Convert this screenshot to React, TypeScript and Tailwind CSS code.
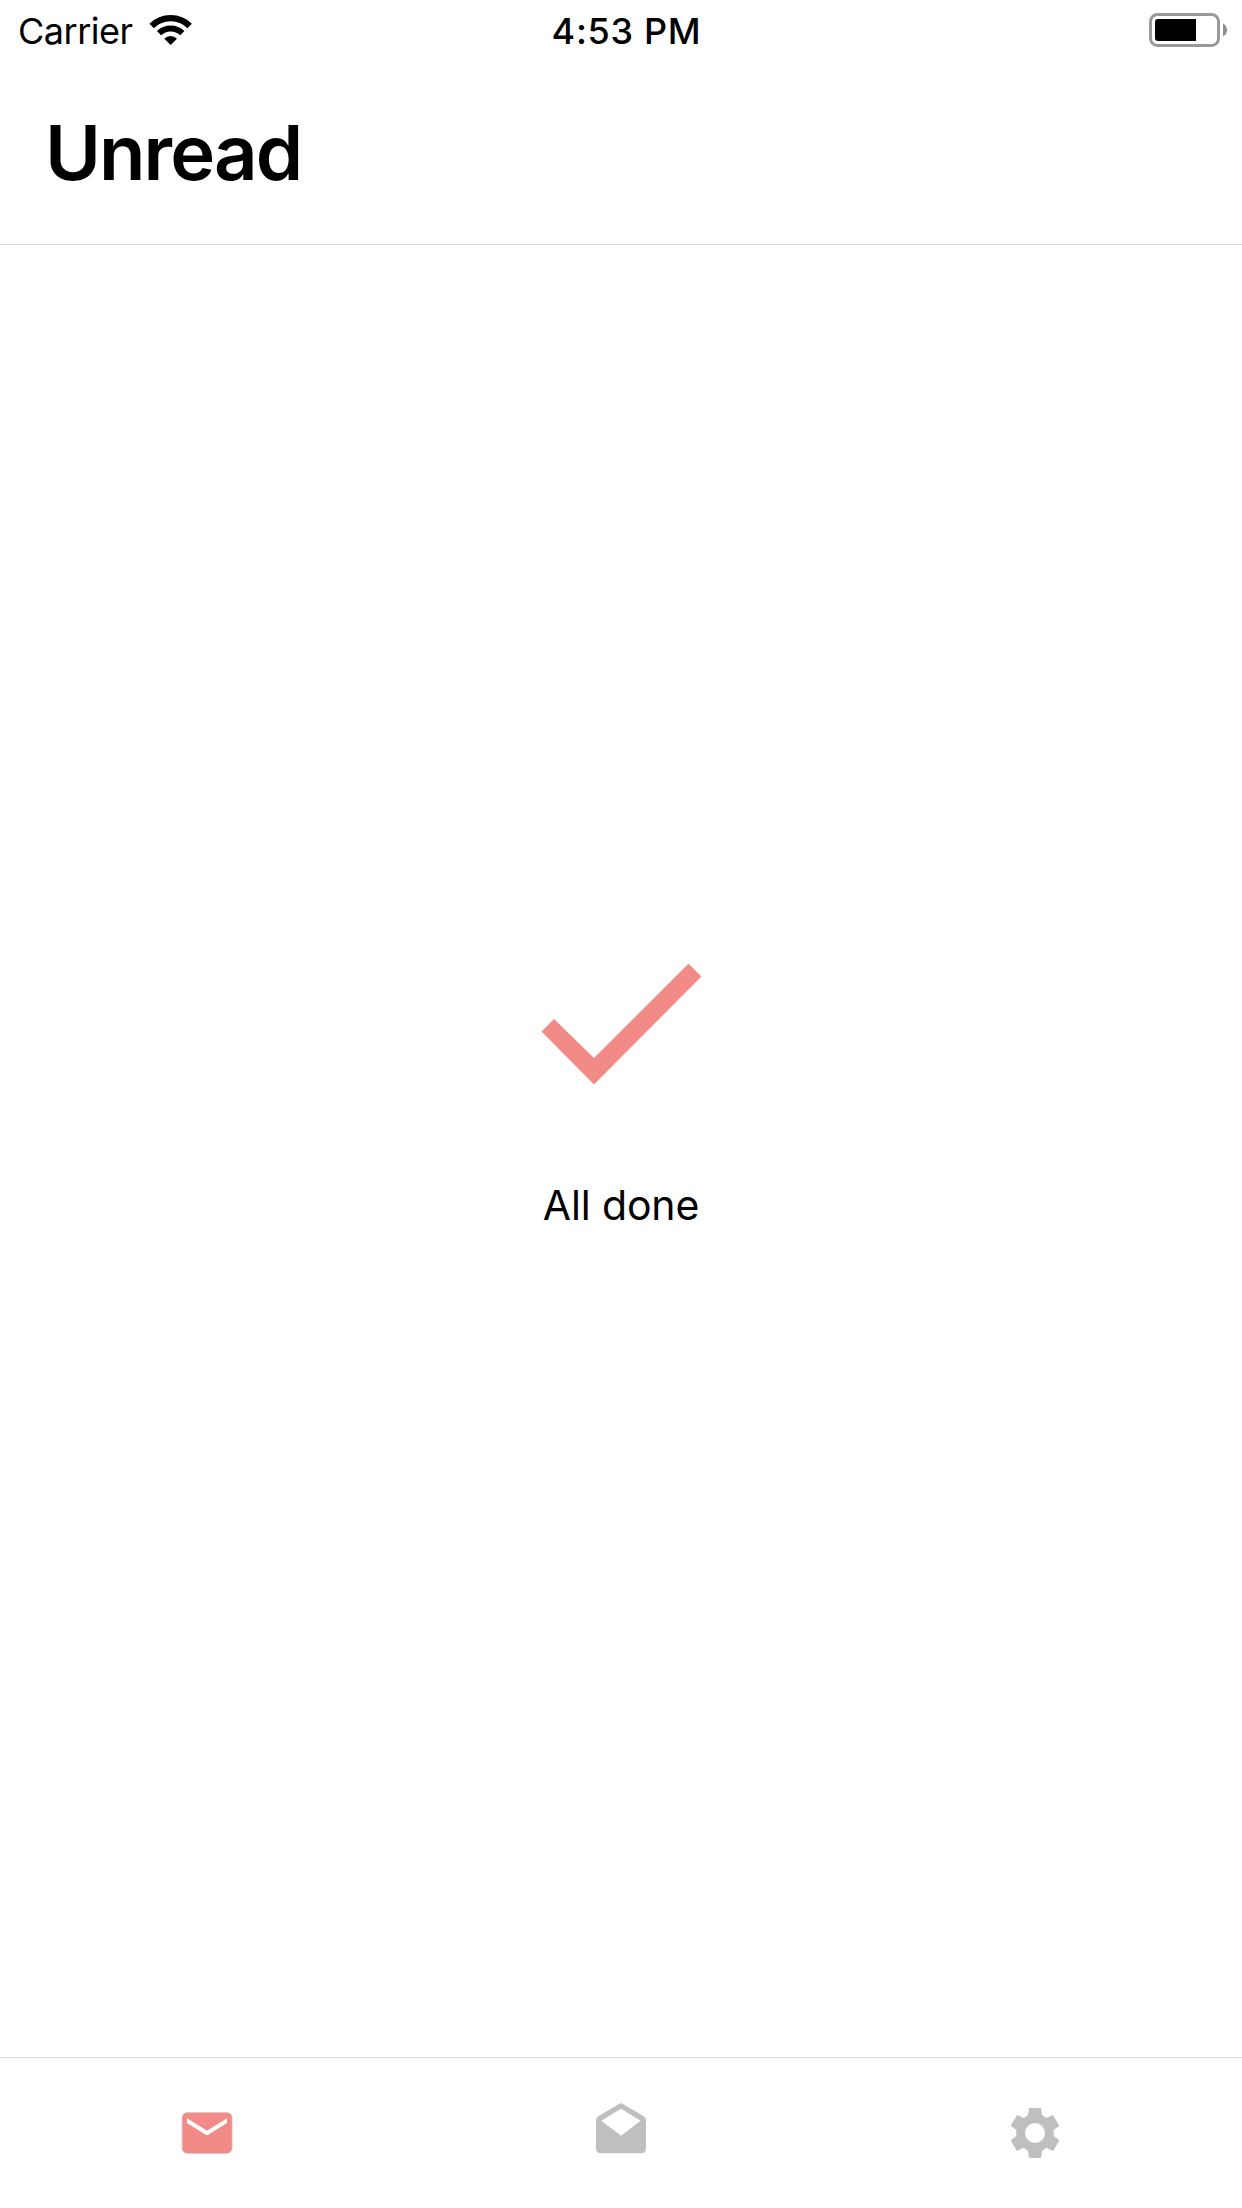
import React from "react";

function WifiIcon() {
  return (
    <svg className="relative -top-px h-[32px] w-[44px]" viewBox="448 42 132 96" fill="none" stroke="#000">
      <path d="M456 78A81 81 0 0 1 570 78" strokeWidth="19" />
      <path d="M478 99.500A50.500 50.500 0 0 1 548 99.500" strokeWidth="18" />
      <path d="M513 135L494 116Q502 108 513 108Q524 108 532 116Z" fill="#000" stroke="none" />
    </svg>
  );
}

function BatteryIcon() {
  return (
    <svg className="h-[34px] w-[78px]" viewBox="0 0 78 34">
      <rect x="1.500" y="1.500" width="68" height="31" rx="7" fill="none" stroke="#999" strokeWidth="3" />
      <path d="M9 6H47V28H9Q6 28 6 25V9Q6 6 9 6Z" />
      <path d="M74 10.500Q78 12.500 78 17Q78 21.500 74 23.500Z" fill="#8e8e8e" />
    </svg>
  );
}

function CheckIcon() {
  return (
    <svg className="h-[122px] w-[162px]" viewBox="0 0 162 122" fill="#f28b87">
      <path d="M1.500 68.500L14 56L54 95L148.500 .7L161.500 13.500L54 121.500Z" />
    </svg>
  );
}

function MailIcon() {
  return (
    <svg className="size-[60px]" viewBox="0 0 60 60">
      <rect x="5.200" y="9.700" width="49.800" height="40.600" rx="5" fill="#f28b87" stroke="#d9b3b3" strokeWidth=".8" />
      <path d="M10 15.300L30 27.800L50 15.300V20L30 32.500L10 20Z" fill="#fff" />
    </svg>
  );
}

function OpenMailIcon() {
  return (
    <svg className="size-[60px]" viewBox="0 0 60 60">
      <path
        fillRule="evenodd"
        fill="#bfbfbf"
        d="M30 0L52.500 13Q55 14.500 55 17.500V45.300Q55 50.300 50 50.300H10Q5 50.300 5 45.300V17.500Q5 14.500 7.500 13ZM30 5.700L10.300 17.700L30 32.700L49.700 17.700Z"
      />
    </svg>
  );
}

function GearIcon() {
  return (
    <svg className="size-[60px]" viewBox="60 189 180 180">
      <path
        fillRule="evenodd"
        fill="#bfbfbf"
        d="M134 204H166Q168 204 168.500 206L171 225L184 234L202 226Q204 225 205 227L222 255Q223 257 221 259L206 270V288L221 299Q223 300 222 302L206 331Q205 333 203 332L184 323L171 333L168.500 352Q168 354 166 354H134Q132 354 131.500 352L129 333L116 323L97 332Q95 333 94 331L78 302Q77 300 79 299L94 288V270L79 259Q77 257 78 255L95 227Q96 225 98 226L116 234L129 225L131.500 206Q132 204 134 204ZM150 249A30 30 0 1 0 150 309A30 30 0 1 0 150 249Z"
      />
    </svg>
  );
}

export default function App() {
  return (
    <div className="flex h-[2208px] w-[1242px] flex-col bg-white font-['Inter',sans-serif] text-black">
      <div className="grid h-[60px] shrink-0 grid-cols-3 items-center text-[36px] leading-[62px]">
        <div className="flex items-center pl-[18px]">
          <span className="w-[131px] tracking-[-0.5px]">Carrier</span>
          <WifiIcon />
        </div>
        <span className="pl-[11px] text-center font-medium tracking-[0.7px]">4:53 PM</span>
        <div className="flex justify-end pr-[15px] pb-[2px]">
          <BatteryIcon />
        </div>
      </div>
      <header className="flex h-[185px] shrink-0 items-center border-b border-[#dadada] pb-px pl-[45px]">
        <h1 className="text-[76px] leading-[90px] font-semibold tracking-[-1.9px]">Unread</h1>
      </header>
      <main className="flex flex-1 flex-col items-center pt-[718px]">
        <CheckIcon />
        <p className="mt-[95px] text-[41px] leading-[50px] tracking-[-0.15px]">All done</p>
      </main>
      <nav className="grid h-[151px] shrink-0 grid-cols-3 justify-items-center border-t border-[#dadada] pt-[45px]">
        <MailIcon />
        <OpenMailIcon />
        <GearIcon />
      </nav>
    </div>
  );
}
